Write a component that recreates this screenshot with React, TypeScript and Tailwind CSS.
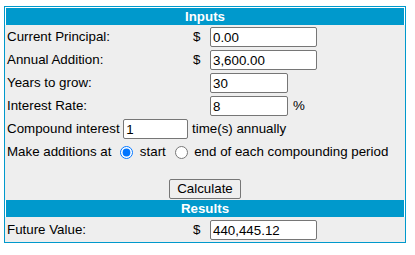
import React from 'react'

type FieldProps = {
  value: string
  width: string
}

function Field({ value, width }: FieldProps) {
  return (
    <input
      type="text"
      defaultValue={value}
      className={`${width} h-[20px] rounded-[2px] border border-[#767676] bg-white px-[2px] text-[13.33px] text-black outline-none`}
    />
  )
}

function MoneyRow({ label, value }: { label: string; value: string }) {
  return (
    <div className="flex h-[23px] items-center pt-px">
      <div className="w-[186px] pl-[2px]">{label}</div>
      <div className="w-[19px] pl-[2px]">$</div>
      <Field value={value} width="w-[107px]" />
    </div>
  )
}

export default function App() {
  return (
    <div className="pl-[4px] pt-[6px] font-['Liberation_Sans',Arial,sans-serif] text-[13.33px] text-black">
      <div className="w-[402px] border border-[#0099cc] bg-white">
        <div className="mx-px mt-px h-[17px] bg-[#0099cc] text-center font-bold leading-[17px] text-white">Inputs</div>

        <div className="bg-[#eeeeee]">
          <MoneyRow label="Current Principal:" value="0.00" />
          <MoneyRow label="Annual Addition:" value="3,600.00" />
          <div className="flex h-[23px] items-center pt-px">
            <div className="w-[205px] pl-[2px]">Years to grow:</div>
            <Field value="30" width="w-[78px]" />
          </div>
          <div className="flex h-[23px] items-center pt-px">
            <div className="w-[205px] pl-[2px]">Interest Rate:</div>
            <Field value="8" width="w-[78px]" />
            <span className="ml-[5px]">%</span>
          </div>

          <div className="flex h-[23px] items-center pt-px pl-[2px] whitespace-pre">
            <span>Compound interest </span>
            <Field value="1" width="w-[65px]" />
            <span> time(s) annually</span>
          </div>

          <div className="flex h-[24px] items-center pl-[2px] whitespace-pre">
            <span>Make additions at </span>
            <input type="radio" name="when" defaultChecked className="ml-[5px] mr-[3px] h-[13px] w-[13px]" />
            <span> start </span>
            <input type="radio" name="when" className="ml-[5px] mr-[3px] h-[13px] w-[13px]" />
            <span> end of each compounding period</span>
          </div>

          <div className="flex h-[36px] justify-center pt-[15px]">
            <button
              type="button"
              className="h-[20px] w-[72px] rounded-[2px] border border-[#767676] bg-[#efefef] text-[13.33px] leading-[18px] text-black"
            >
              Calculate
            </button>
          </div>

          <div className="bg-white px-px">
            <div className="h-[17px] bg-[#0099cc] text-center font-bold leading-[17px] text-white">Results</div>
          </div>

          <div className="flex h-[25px] items-center pt-[3px] pb-[2px]">
            <div className="w-[186px] pl-[2px]">Future Value:</div>
            <div className="w-[19px] pl-[2px]">$</div>
            <Field value="440,445.12" width="w-[107px]" />
          </div>
        </div>
      </div>
    </div>
  )
}
